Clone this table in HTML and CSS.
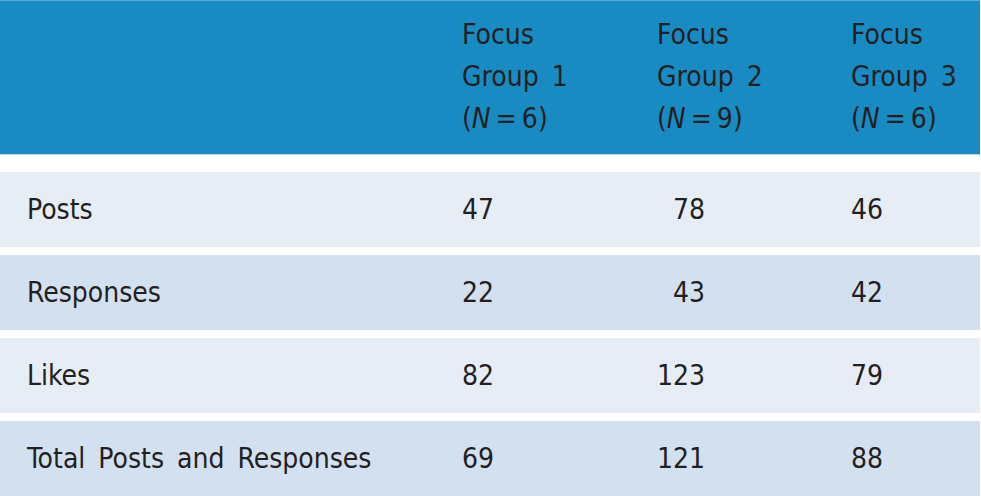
FILE: index.html
```html
<!DOCTYPE html>
<html lang="en">
<head>
<meta charset="utf-8">
<title>Focus group activity</title>
<link rel="stylesheet" href="styles.css">
</head>
<body>
<div class="table">
  <div class="head">
    <div class="cell"></div>
    <div class="cell">Focus<br>Group 1<br>(<i>N</i>&#8201;=&#8201;6)</div>
    <div class="cell">Focus<br>Group 2<br>(<i>N</i>&#8201;=&#8201;9)</div>
    <div class="cell">Focus<br>Group 3<br>(<i>N</i>&#8201;=&#8201;6)</div>
  </div>
  <div class="row light">
    <div class="cell label">Posts</div>
    <div class="cell">47</div>
    <div class="cell">&#8199;78</div>
    <div class="cell">46</div>
  </div>
  <div class="row dark">
    <div class="cell label">Responses</div>
    <div class="cell">22</div>
    <div class="cell">&#8199;43</div>
    <div class="cell">42</div>
  </div>
  <div class="row light">
    <div class="cell label">Likes</div>
    <div class="cell">82</div>
    <div class="cell">123</div>
    <div class="cell">79</div>
  </div>
  <div class="row dark">
    <div class="cell label">Total Posts and Responses</div>
    <div class="cell">69</div>
    <div class="cell">121</div>
    <div class="cell">88</div>
  </div>
</div>
</body>
</html>
```
FILE: styles.css
```css
html, body {
  margin: 0;
  padding: 0;
  background: #ffffff;
}

.table {
  width: 980px;
  font-family: "DejaVu Sans Condensed", "DejaVu Sans", sans-serif;
  font-stretch: condensed;
  font-size: 28px;
  word-spacing: 5px;
  color: #231f20;
}

.head,
.row {
  display: grid;
  grid-template-columns: 462px 195px 194px 1fr;
}

.head {
  background: #188bc3;
  border-top: 1px solid #5fa9d4;
  border-bottom: 1px solid #b3d6ec;
  padding: 13px 0 14px;
  line-height: 42px;
  height: 126px;
  margin-bottom: 17px;
}

.head i {
  font-style: italic;
}

.row {
  height: 75px;
  line-height: 30px;
  align-items: center;
  margin-top: 8px;
}

.head + .row {
  margin-top: 0;
}

.light {
  background: #e6edf5;
}

.dark {
  background: #d3e0ef;
}

.label {
  padding-left: 27px;
}
```
